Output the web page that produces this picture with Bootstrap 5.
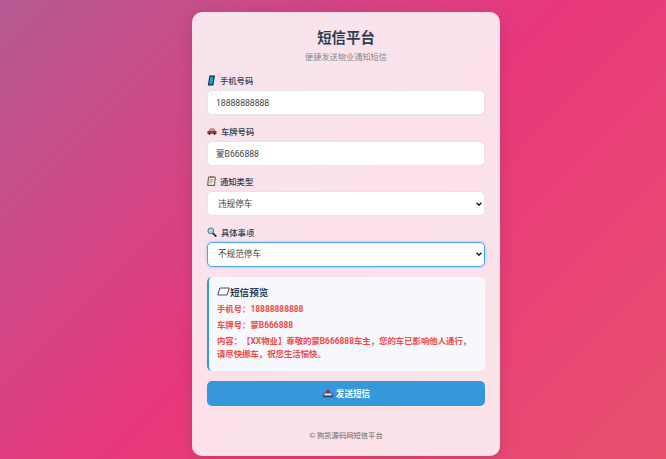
<!DOCTYPE html>
<html lang="zh">
<head>
<meta charset="utf-8">
<title>短信平台</title>
<link href="https://cdn.jsdelivr.net/npm/bootstrap@5.3.0/dist/css/bootstrap.min.css" rel="stylesheet">
<style>
html,body{height:459px;overflow:hidden}
body{background:linear-gradient(135deg,#b45a92 0%,#e8387c 50%,#e8506e 100%);font-family:"Noto Sans CJK SC","Noto Sans",sans-serif;padding-top:12px;text-spacing-trim:space-all}
.sheet{width:308px;height:444px;margin-left:192px;background:rgba(255,255,255,.85);border-radius:10px;padding:15px;box-shadow:0 4px 16px rgba(0,0,0,.12)}
.sheet-title{font-size:14.4px;font-weight:700;color:#2c3e50;line-height:20px;margin:0 0 3px;text-align:center}
.sheet-sub{font-size:8.2px;color:#7f8c8d;line-height:12px;text-align:center;margin-bottom:12px}
.fld{margin-bottom:9.67px}
.fld-label{display:flex;align-items:center;gap:4px;font-size:8.3px;font-weight:500;color:#2c3e50;line-height:12px;height:12px;margin-bottom:4px}
.fld-label svg{display:block;flex:none}
.form-control.fld-in,.form-select.fld-in{height:25px;min-height:0;font-size:8.6px;line-height:12px;color:#444;padding:0 8px;border:1px solid #e3e3e8;border-radius:5px;font-family:Roboto,"Noto Sans CJK SC",sans-serif;background-color:#fff}
.form-select.fld-in{padding:0 12px 0 10px;background-image:url("data:image/svg+xml,%3csvg xmlns='http://www.w3.org/2000/svg' viewBox='0 0 6 4'%3e%3cpath fill='none' stroke='%23111' stroke-width='1.3' d='M.6.8 3 3.2 5.4.8'/%3e%3c/svg%3e");background-size:6px 4px;background-position:right 2.5px center}
.form-select.fld-in.act{border:1.5px solid #4da6e0;box-shadow:0 0 3px rgba(52,152,219,.45)}
.peek{background:#f7f8fb;border-left:2px solid #3498db;border-radius:5px;height:94.5px;padding:8px 8px;margin-top:1.33px;margin-bottom:9.5px}
.peek-h{font-size:9.6px;font-weight:700;color:#2c3e50;line-height:14px;display:flex;align-items:center;margin-bottom:4px}
.peek-t{font-size:8.4px;font-weight:700;color:#ee4a4a;line-height:13px;margin-bottom:3px;font-family:Roboto,"Noto Sans CJK SC",sans-serif}
.send.btn{width:100%;height:25px;background:#3498db;border:0;border-radius:5px;color:#fff;font-size:8.6px;font-weight:700;padding:0;display:flex;align-items:center;justify-content:center;gap:2px;font-family:"Noto Sans CJK SC",sans-serif}
.foot{font-size:7.3px;color:#666;text-align:center;line-height:10px;margin-top:24px}
</style>
</head>
<body>
<main class="sheet">
  <h1 class="sheet-title">短信平台</h1>
  <p class="sheet-sub">便捷发送物业通知短信</p>
  <form>
    <div class="fld">
      <label class="fld-label" for="m"><svg width="9" height="11" viewBox="0 0 9 11"><path d="M2.4.5h5.6L6.4 10.5H.8z" fill="#0d2b3a"/><path d="M3.1 1.8h3.5L5.5 9.2H2z" fill="#10a5c8"/></svg>手机号码</label>
      <input id="m" class="form-control fld-in" value="18888888888">
    </div>
    <div class="fld">
      <label class="fld-label" for="c"><svg width="10" height="8" viewBox="0 0 10 8"><path d="M.3 6.8V4.6L2 3.8 3.2 1.4h3.6L8 3.6l1.6.9v2.3z" fill="#a8322d"/><path d="M3.6 2h1.3v1.7H2.8zM5.4 2h1.1l.8 1.7H5.4z" fill="#b9d6e6"/><circle cx="2.5" cy="6.8" r="1.1" fill="#222"/><circle cx="7.5" cy="6.8" r="1.1" fill="#222"/></svg>车牌号码</label>
      <input id="c" class="form-control fld-in" value="蒙B666888">
    </div>
    <div class="fld">
      <label class="fld-label" for="t"><svg width="9" height="10" viewBox="0 0 9 10"><path d="M1.5 1h6.8L7.5 9.4H.7z" fill="#f5efdc" stroke="#4a4036" stroke-width=".9"/><path d="M3 .3h3v1.5H3z" fill="#8a6d4d"/><path d="M2.6 3.6h3.8M2.4 5.2h3.8M2.2 6.8h2.8" stroke="#6b6b6b" stroke-width=".6"/></svg>通知类型</label>
      <select id="t" class="form-select fld-in"><option>违规停车</option></select>
    </div>
    <div class="fld">
      <label class="fld-label" for="d"><svg width="10" height="10" viewBox="0 0 10 10"><path d="M5.5 5.8l3.2 3.2" stroke="#30303a" stroke-width="1.8" stroke-linecap="round"/><circle cx="3.8" cy="3.8" r="2.9" fill="#a9d8ee" stroke="#5a6a78" stroke-width="1"/></svg>具体事项</label>
      <select id="d" class="form-select fld-in act"><option>不规范停车</option></select>
    </div>
    <section class="peek">
      <div class="peek-h"><svg width="13" height="9" viewBox="0 0 13 9"><path d="M2.8 1h9.4L10.2 8H.8z" fill="#fff" stroke="#2c3e50" stroke-width=".9"/></svg>短信预览</div>
      <div class="peek-t">手机号：18888888888</div>
      <div class="peek-t">车牌号：蒙B666888</div>
      <div class="peek-t">内容：【XX物业】尊敬的蒙B666888车主，您的车已影响他人通行，请尽快挪车，祝您生活愉快。</div>
    </section>
    <button type="button" class="btn send"><svg width="12" height="10" viewBox="0 0 12 10"><path d="M3 5h6l2 3.8H1z" fill="#e9eef2" stroke="#1f3a55" stroke-width=".7"/><path d="M1.2 7.4h9.6v1.8H1.2z" fill="#2a4a6a"/><circle cx="6" cy="3.6" r="1.8" fill="#b01e2e"/></svg>发送短信</button>
  </form>
  <p class="foot">© 狗凯源码网短信平台</p>
</main>
<script src="https://cdn.jsdelivr.net/npm/bootstrap@5.3.0/dist/js/bootstrap.bundle.min.js"></script>
</body>
</html>
